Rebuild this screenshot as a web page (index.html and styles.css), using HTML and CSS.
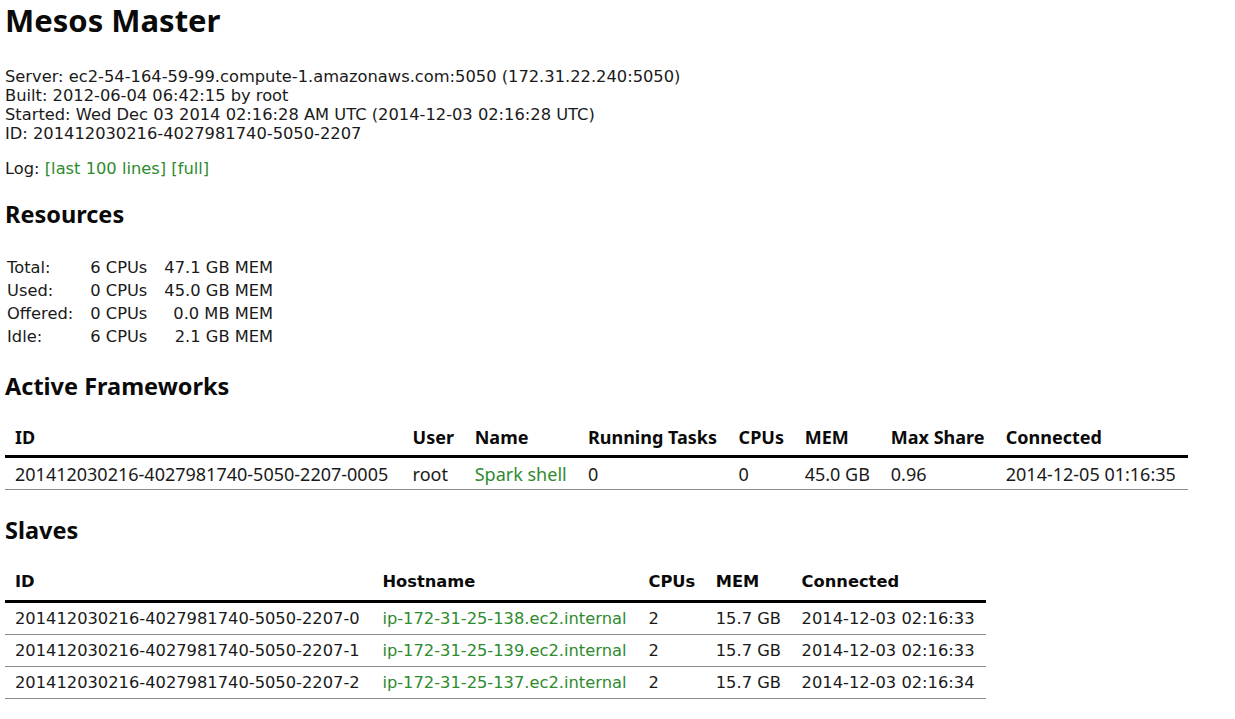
FILE: index.html
```html
<!DOCTYPE html>
<html>
<head>
<meta charset="utf-8">
<title>Mesos Master</title>
<link rel="stylesheet" href="styles.css">
</head>
<body>
<h1 class="title">Mesos Master</h1>
<div class="info">
  <div>Server: ec2-54-164-59-99.compute-1.amazonaws.com:5050 (172.31.22.240:5050)</div>
  <div>Built: 2012-06-04 06:42:15 by root</div>
  <div>Started: Wed Dec 03 2014 02:16:28 AM UTC (2014-12-03 02:16:28 UTC)</div>
  <div>ID: 201412030216-4027981740-5050-2207</div>
</div>
<div class="log">Log: <a href="#">[last 100 lines]</a> <a href="#">[full]</a></div>

<h2 class="section">Resources</h2>
<table class="resources">
  <tr><td>Total:</td><td>6 CPUs</td><td class="num">47.1 GB MEM</td></tr>
  <tr><td>Used:</td><td>0 CPUs</td><td class="num">45.0 GB MEM</td></tr>
  <tr><td>Offered:</td><td>0 CPUs</td><td class="num">0.0 MB MEM</td></tr>
  <tr><td>Idle:</td><td>6 CPUs</td><td class="num">2.1 GB MEM</td></tr>
</table>

<h2 class="section">Active Frameworks</h2>
<table class="grid frameworks">
  <thead>
    <tr><th class="c-id">ID</th><th>User</th><th>Name</th><th>Running Tasks</th><th>CPUs</th><th>MEM</th><th>Max Share</th><th>Connected</th></tr>
  </thead>
  <tbody>
    <tr><td>201412030216-4027981740-5050-2207-0005</td><td>root</td><td><a href="#">Spark shell</a></td><td>0</td><td>0</td><td>45.0 GB</td><td>0.96</td><td>2014-12-05 01:16:35</td></tr>
  </tbody>
</table>

<h2 class="section">Slaves</h2>
<table class="grid slaves">
  <thead>
    <tr><th class="c-id">ID</th><th>Hostname</th><th>CPUs</th><th>MEM</th><th>Connected</th></tr>
  </thead>
  <tbody>
    <tr><td>201412030216-4027981740-5050-2207-0</td><td><a href="#">ip-172-31-25-138.ec2.internal</a></td><td>2</td><td>15.7 GB</td><td>2014-12-03 02:16:33</td></tr>
    <tr><td>201412030216-4027981740-5050-2207-1</td><td><a href="#">ip-172-31-25-139.ec2.internal</a></td><td>2</td><td>15.7 GB</td><td>2014-12-03 02:16:33</td></tr>
    <tr><td>201412030216-4027981740-5050-2207-2</td><td><a href="#">ip-172-31-25-137.ec2.internal</a></td><td>2</td><td>15.7 GB</td><td>2014-12-03 02:16:34</td></tr>
  </tbody>
</table>
</body>
</html>
```

FILE: styles.css
```css
html, body {
  background: #ffffff;
}
body {
  margin: 0;
  padding: 0 5px;
  font-family: "DejaVu Sans", Verdana, sans-serif;
  font-size: 16.3px;
  color: #1a1a1a;
}
a {
  color: #2e8b2e;
  text-decoration: none;
}
.title {
  font-family: "Noto Sans", "Open Sans", sans-serif;
  font-weight: 700;
  font-size: 31px;
  line-height: 40px;
  margin: 0;
  padding: 0;
  color: #0a0a0a;
}
.info {
  margin-top: 27px;
  line-height: 19px;
}
.log {
  margin-top: 16px;
  line-height: 19px;
}
.section {
  font-family: "Noto Sans", "Open Sans", sans-serif;
  font-weight: 700;
  font-size: 23.5px;
  line-height: 30px;
  margin: 0;
  color: #0a0a0a;
}
.log + .section {
  margin-top: 21px;
}
.resources {
  border-collapse: collapse;
  margin: 27px 0 23px 1px;
}
.resources td {
  padding: 0 16px 0 1px;
  height: 23px;
  line-height: 23px;
  vertical-align: middle;
}
.resources td.num {
  text-align: right;
  padding-right: 0;
}
.grid {
  border-collapse: collapse;
  margin: 18px 0 25px 0;
}
.grid th {
  text-align: left;
  font-weight: 700;
  padding: 0 10px 0 10px;
  height: 36px;
  border-bottom: 3px solid #000;
  color: #0a0a0a;
}
.grid td {
  padding: 0 10px 0 10px;
  height: 31px;
  border-bottom: 1px solid #8c8c8c;
  white-space: nowrap;
}
.frameworks {
  width: 1183px;
  font-family: "Noto Sans", "Open Sans", sans-serif;
  font-size: 18px;
}
.frameworks th {
  font-size: 18px;
}
.slaves {
  width: 981px;
}
.slaves th {
  font-size: 16.3px;
  height: 37px;
}
```
